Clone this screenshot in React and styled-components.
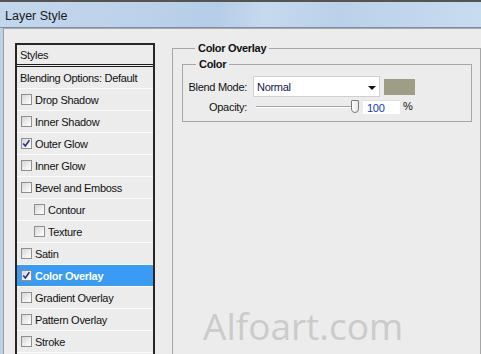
import React from "react";
import styled, { createGlobalStyle } from "styled-components";

const Global = createGlobalStyle`
  html, body { margin: 0; padding: 0; background: #ececec; }
  body { font-family: "Liberation Sans", Arial, sans-serif; }
  * { box-sizing: border-box; }
`;

const Window = styled.div`
  position: relative;
  width: 481px;
  height: 354px;
  overflow: hidden;
  display: flex;
  flex-direction: column;
  background: #ececec;
  font-family: "Liberation Sans", Arial, sans-serif;
  font-size: 11px;
  letter-spacing: -0.3px;
  color: #111;
`;

const TopEdge = styled.div`
  height: 2px;
  background: #545454;
  flex: none;
`;

const TitleBar = styled.div`
  height: 26px;
  flex: none;
  display: flex;
  align-items: center;
  padding-left: 5px;
  padding-top: 3px;
  border-bottom: 1px solid #7c8ea2;
  background: linear-gradient(100deg, #c3d7ec 0%, #bcd2ea 30%, #b5cde7 45%, #c6daee 55%, #bad1e9 70%, #c8dcf0 100%);
  font-size: 12.5px;
  letter-spacing: 0;
  color: #1a1a1a;
`;

const Frame = styled.div`
  flex: 1;
  display: flex;
  border-left: 3px solid #bcd2ea;
`;

const Client = styled.div`
  flex: 1;
  display: flex;
  align-items: flex-start;
  padding: 14px 0 0 11px;
  border-left: 1px solid #9c9c9c;
  border-top: 1px solid #a9a9a9;
`;

const StyleList = styled.div`
  width: 140px;
  min-height: 330px;
  flex: none;
  border: 2px solid #262626;
  border-bottom: none;
  display: flex;
  flex-direction: column;
`;

const HeadRow = styled.div`
  height: ${(p) => p.$h}px;
  display: flex;
  align-items: center;
  padding-left: 3px;
  border-bottom: ${(p) => (p.$double ? "3px double #1e1e1e" : "1px solid #fbfbfb")};
`;

const Row = styled.div`
  height: 22px;
  display: flex;
  align-items: center;
  padding-left: ${(p) => (p.$indent ? 17 : 4)}px;
  gap: 3px;
  border-bottom: 1px solid #fbfbfb;
  background: ${(p) => (p.$active ? "#3a9bf4" : "transparent")};
  color: ${(p) => (p.$active ? "#fff" : "#111")};
  font-weight: ${(p) => (p.$active ? "bold" : "normal")};
`;

const Box = styled.span`
  width: 11px;
  height: 11px;
  flex: none;
  border: 1px solid #8f8f8f;
  background: linear-gradient(135deg, #d6d6d6 0%, #f4f4f4 70%, #ffffff 100%);
  display: flex;
  align-items: center;
  justify-content: center;
`;

const RightPanel = styled.fieldset`
  flex: 1;
  margin: -1px 0 0 17px;
  padding: 3px 8px 0 9px;
  min-height: 330px;
  border: 1px solid #a6a6a6;
  min-width: 0;
`;

const Legend = styled.legend`
  margin-left: 13px;
  padding: 0 3px;
  font-weight: bold;
  font-size: 11px;
  line-height: 13px;
  color: #111;
`;

const Group = styled.fieldset`
  margin: 0;
  padding: 5px 0 7px 0;
  border: 1px solid #a6a6a6;
  min-width: 0;
`;

const FieldRow = styled.div`
  display: flex;
  align-items: center;
  height: ${(p) => p.$h}px;
  margin-top: ${(p) => p.$mt || 0}px;
`;

const Label = styled.span`
  width: 64px;
  margin-right: 6px;
  text-align: right;
  flex: none;
  color: #111;
`;

const Select = styled.div`
  width: 127px;
  height: 21px;
  background: #fff;
  border: 1px solid #d0d0d0;
  display: flex;
  align-items: center;
  justify-content: space-between;
  padding: 1px 3px 0 3px;
  color: #14164a;
`;

const Arrow = styled.span`
  width: 0;
  height: 0;
  border-left: 4px solid transparent;
  border-right: 4px solid transparent;
  border-top: 4px solid #111;
  margin-top: 1px;
`;

const Swatch = styled.div`
  width: 31px;
  height: 16px;
  margin-left: 4px;
  background: ${(p) => p.$color};
`;

const Slider = styled.div`
  width: 106px;
  height: 14px;
  display: flex;
  align-items: center;
  padding-left: 3px;
`;

const Track = styled.div`
  flex: 1;
  height: 2px;
  border-top: 1px solid #a4a4a4;
  border-bottom: 1px solid #ffffff;
`;

const Thumb = styled.div`
  width: 8px;
  height: 13px;
  border: 1px solid #7a7a7a;
  border-radius: 1px 1px 4px 4px;
  background: linear-gradient(90deg, #ffffff 0%, #e6e6e6 100%);
  margin-top: -1px;
`;

const NumInput = styled.div`
  width: 37px;
  height: 14px;
  margin-left: 4px;
  background: #fff;
  border-top: 1px solid #e0e0e0;
  display: flex;
  align-items: center;
  padding-left: 4px;
  color: #0b3bc4;
`;

const Unit = styled.span`
  margin-left: 3px;
  margin-top: -3px;
  color: #111;
`;

const Watermark = styled.div`
  position: absolute;
  left: 203px;
  top: 307px;
  font-family: "Open Sans", sans-serif;
  font-size: 37px;
  line-height: 37px;
  letter-spacing: 0;
  color: #cbcbcb;
  pointer-events: none;
`;

const Check = () => (
  <svg width="9" height="9" viewBox="0 0 9 9">
    <path d="M1.2 4.5 L3.3 7 L7.4 1.2" fill="none" stroke="#24338c" strokeWidth="1.6" />
  </svg>
);

const items = [
  { label: "Drop Shadow" },
  { label: "Inner Shadow" },
  { label: "Outer Glow", checked: true },
  { label: "Inner Glow" },
  { label: "Bevel and Emboss" },
  { label: "Contour", indent: true },
  { label: "Texture", indent: true },
  { label: "Satin" },
  { label: "Color Overlay", checked: true, active: true },
  { label: "Gradient Overlay" },
  { label: "Pattern Overlay" },
  { label: "Stroke" },
];

export default function App() {
  return (
    <>
      <Global />
      <Window>
        <TopEdge />
        <TitleBar>Layer Style</TitleBar>
        <Frame>
          <Client>
            <StyleList>
              <HeadRow $h={22} $double>Styles</HeadRow>
              <HeadRow $h={22}>Blending Options: Default</HeadRow>
              {items.map((it) => (
                <Row key={it.label} $indent={it.indent} $active={it.active}>
                  <Box>{it.checked && <Check />}</Box>
                  {it.label}
                </Row>
              ))}
            </StyleList>
            <RightPanel>
              <Legend>Color Overlay</Legend>
              <Group>
                <Legend>Color</Legend>
                <FieldRow $h={21}>
                  <Label>Blend Mode:</Label>
                  <Select>
                    Normal
                    <Arrow />
                  </Select>
                  <Swatch $color="#9d9e85" />
                </FieldRow>
                <FieldRow $h={14} $mt={3}>
                  <Label>Opacity:</Label>
                  <Slider>
                    <Track />
                    <Thumb />
                  </Slider>
                  <NumInput>100</NumInput>
                  <Unit>%</Unit>
                </FieldRow>
              </Group>
            </RightPanel>
          </Client>
        </Frame>
        <Watermark>Alfoart.com</Watermark>
      </Window>
    </>
  );
}
